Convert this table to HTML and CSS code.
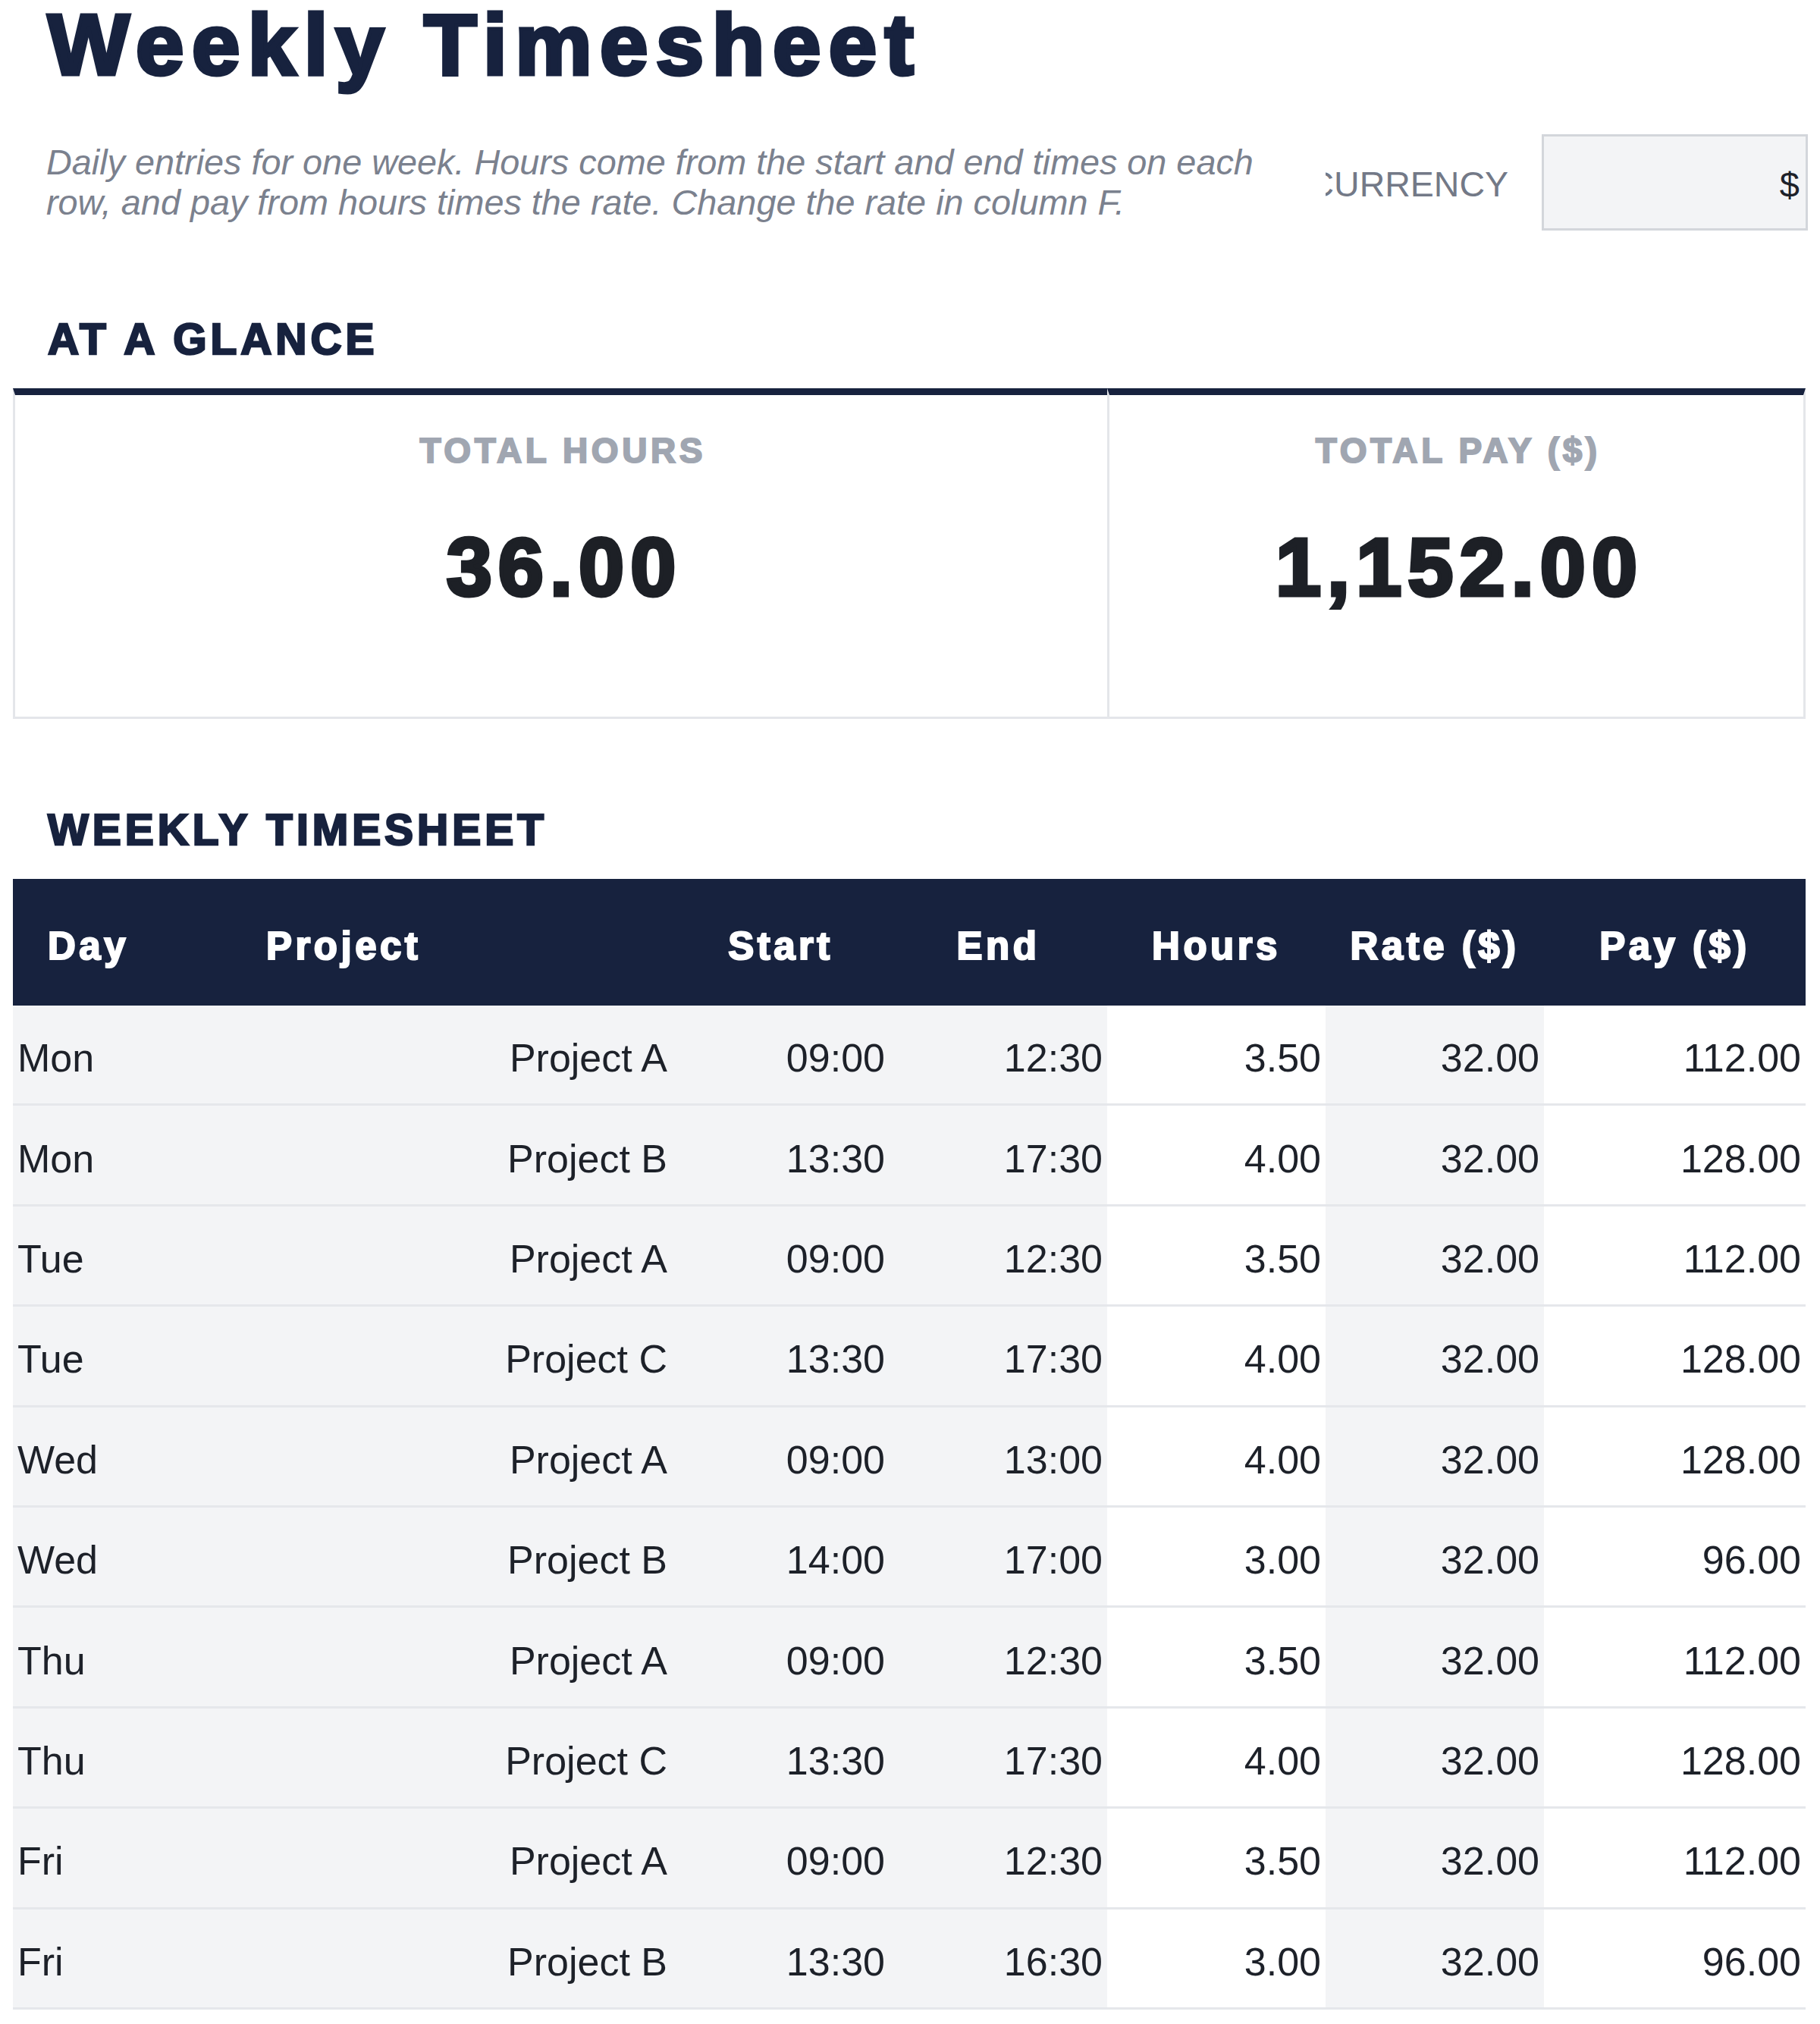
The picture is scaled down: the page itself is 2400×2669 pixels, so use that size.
FILE: index.html
```html
<!DOCTYPE html>
<html lang="en">
<head>
<meta charset="utf-8">
<title>Weekly Timesheet</title>
<link rel="stylesheet" href="styles.css">
</head>
<body>
<div class="page">
  <h1 class="title">Weekly Timesheet</h1>

  <div class="intro grid">
    <p class="subtitle">Daily entries for one week. Hours come from the start and end times on each row, and pay from hours times the rate. Change the rate in column F.</p>
    <div class="cur-label"><span>CURRENCY</span></div>
    <div class="cur-box">$</div>
  </div>

  <h2 class="section">AT A GLANCE</h2>

  <div class="cards grid">
    <div class="card card-hours">
      <div class="card-label">TOTAL HOURS</div>
      <div class="card-value">36.00</div>
    </div>
    <div class="card card-pay">
      <div class="card-label">TOTAL PAY ($)</div>
      <div class="card-value">1,152.00</div>
    </div>
  </div>

  <h2 class="section section-table">WEEKLY TIMESHEET</h2>

  <div class="table">
    <div class="trow thead grid">
      <div class="th th-left">Day</div>
      <div class="th th-left">Project</div>
      <div class="th">Start</div>
      <div class="th">End</div>
      <div class="th">Hours</div>
      <div class="th">Rate ($)</div>
      <div class="th">Pay ($)</div>
    </div>
    <div class="trow grid"><div class="td td-day">Mon</div><div class="td">Project A</div><div class="td">09:00</div><div class="td">12:30</div><div class="td">3.50</div><div class="td">32.00</div><div class="td">112.00</div></div>
    <div class="trow grid"><div class="td td-day">Mon</div><div class="td">Project B</div><div class="td">13:30</div><div class="td">17:30</div><div class="td">4.00</div><div class="td">32.00</div><div class="td">128.00</div></div>
    <div class="trow grid"><div class="td td-day">Tue</div><div class="td">Project A</div><div class="td">09:00</div><div class="td">12:30</div><div class="td">3.50</div><div class="td">32.00</div><div class="td">112.00</div></div>
    <div class="trow grid"><div class="td td-day">Tue</div><div class="td">Project C</div><div class="td">13:30</div><div class="td">17:30</div><div class="td">4.00</div><div class="td">32.00</div><div class="td">128.00</div></div>
    <div class="trow grid"><div class="td td-day">Wed</div><div class="td">Project A</div><div class="td">09:00</div><div class="td">13:00</div><div class="td">4.00</div><div class="td">32.00</div><div class="td">128.00</div></div>
    <div class="trow grid"><div class="td td-day">Wed</div><div class="td">Project B</div><div class="td">14:00</div><div class="td">17:00</div><div class="td">3.00</div><div class="td">32.00</div><div class="td">96.00</div></div>
    <div class="trow grid"><div class="td td-day">Thu</div><div class="td">Project A</div><div class="td">09:00</div><div class="td">12:30</div><div class="td">3.50</div><div class="td">32.00</div><div class="td">112.00</div></div>
    <div class="trow grid"><div class="td td-day">Thu</div><div class="td">Project C</div><div class="td">13:30</div><div class="td">17:30</div><div class="td">4.00</div><div class="td">32.00</div><div class="td">128.00</div></div>
    <div class="trow grid"><div class="td td-day">Fri</div><div class="td">Project A</div><div class="td">09:00</div><div class="td">12:30</div><div class="td">3.50</div><div class="td">32.00</div><div class="td">112.00</div></div>
    <div class="trow grid"><div class="td td-day">Fri</div><div class="td">Project B</div><div class="td">13:30</div><div class="td">16:30</div><div class="td">3.00</div><div class="td">32.00</div><div class="td">96.00</div></div>
  </div>
</div>
</body>
</html>
```
FILE: styles.css
```css
* { box-sizing: border-box; }

html, body {
  margin: 0;
  background: #ffffff;
}

body {
  font-family: "Liberation Sans", Arial, sans-serif;
  color: #1d2129;
}

.page {
  width: 2381px;
  padding-left: 17px;
}

.grid {
  display: grid;
  grid-template-columns: 288px 581px 287px 287px 288px 288px 345px;
}

/* Title */
.title {
  margin: 2px 0 0;
  padding-left: 46px;
  font-size: 114px;
  line-height: 114px;
  font-weight: 700;
  color: #17223e;
  letter-spacing: 0.092em;
  -webkit-text-stroke-width: 5px;
  white-space: nowrap;
}

/* Intro row */
.intro {
  margin-top: 61px;
  height: 127px;
  align-items: center;
}

.subtitle {
  grid-column: 1 / 6;
  margin: 0;
  padding: 0 40px 0 44px;
  font-style: italic;
  font-size: 46.8px;
  line-height: 53px;
  color: #7b818e;
}

.cur-label {
  grid-column: 6;
  display: flex;
  justify-content: flex-end;
  overflow: hidden;
  padding: 5px 47px 0 0;
  font-size: 46.5px;
  line-height: 53px;
  color: #737987;
  white-space: nowrap;
}

.cur-label span { flex: none; }

.cur-box {
  grid-column: 7;
  margin: 0 -3px;
  height: 127px;
  border: 3px solid #d3d6db;
  background: #f3f4f6;
  display: flex;
  align-items: center;
  justify-content: flex-end;
  padding: 6px 8px 0 0;
  font-size: 47px;
  color: #1d2129;
}

/* Section headings */
.section {
  margin: 114.5px 0 0;
  padding-left: 46px;
  font-size: 57px;
  line-height: 57px;
  font-weight: 700;
  color: #17223e;
  letter-spacing: 0.087em;
  -webkit-text-stroke-width: 2.5px;
  white-space: nowrap;
}

.section-table { margin-top: 117.5px; }

/* Glance cards */
.cards {
  margin-top: 36.5px;
  height: 436px;
}

.card {
  border: 3px solid #e4e6ea;
  border-top: 9px solid #17223e;
  padding-top: 50px;
  text-align: center;
}

.card-hours {
  grid-column: 1 / 5;
  border-right: none;
}

.card-pay { grid-column: 5 / 8; }

.card-label {
  font-size: 46px;
  line-height: 46px;
  font-weight: 700;
  color: #a0a6b1;
  letter-spacing: 0.1em;
  padding-left: 0.1em;
  -webkit-text-stroke-width: 2px;
  white-space: nowrap;
}

.card-value {
  margin-top: 77px;
  font-size: 108px;
  line-height: 108px;
  font-weight: 700;
  color: #1d2026;
  letter-spacing: 0.075em;
  padding-left: 0.075em;
  -webkit-text-stroke-width: 4.8px;
  white-space: nowrap;
}

/* Table */
.table { margin-top: 36.5px; }

.trow {
  height: 132.4px;
  border-bottom: 3px solid #e5e7eb;
}

.thead {
  height: 167px;
  border-bottom: none;
  background: #17223e;
}

.th {
  display: flex;
  align-items: center;
  justify-content: center;
  padding: 10px 0 0 0;
  color: #ffffff;
  font-size: 51px;
  line-height: 51px;
  font-weight: 700;
  letter-spacing: 0.088em;
  -webkit-text-stroke-width: 2.2px;
  white-space: nowrap;
}

.th-left {
  justify-content: flex-start;
  padding-left: 46px;
}

.td {
  display: flex;
  align-items: center;
  justify-content: flex-end;
  padding: 9px 6px 0 6px;
  font-size: 52px;
  line-height: 52px;
  color: #1d2129;
  white-space: nowrap;
}

.td-day { justify-content: flex-start; }

.trow .td:nth-child(-n+4),
.trow .td:nth-child(6) {
  background: #f3f4f6;
}
```
